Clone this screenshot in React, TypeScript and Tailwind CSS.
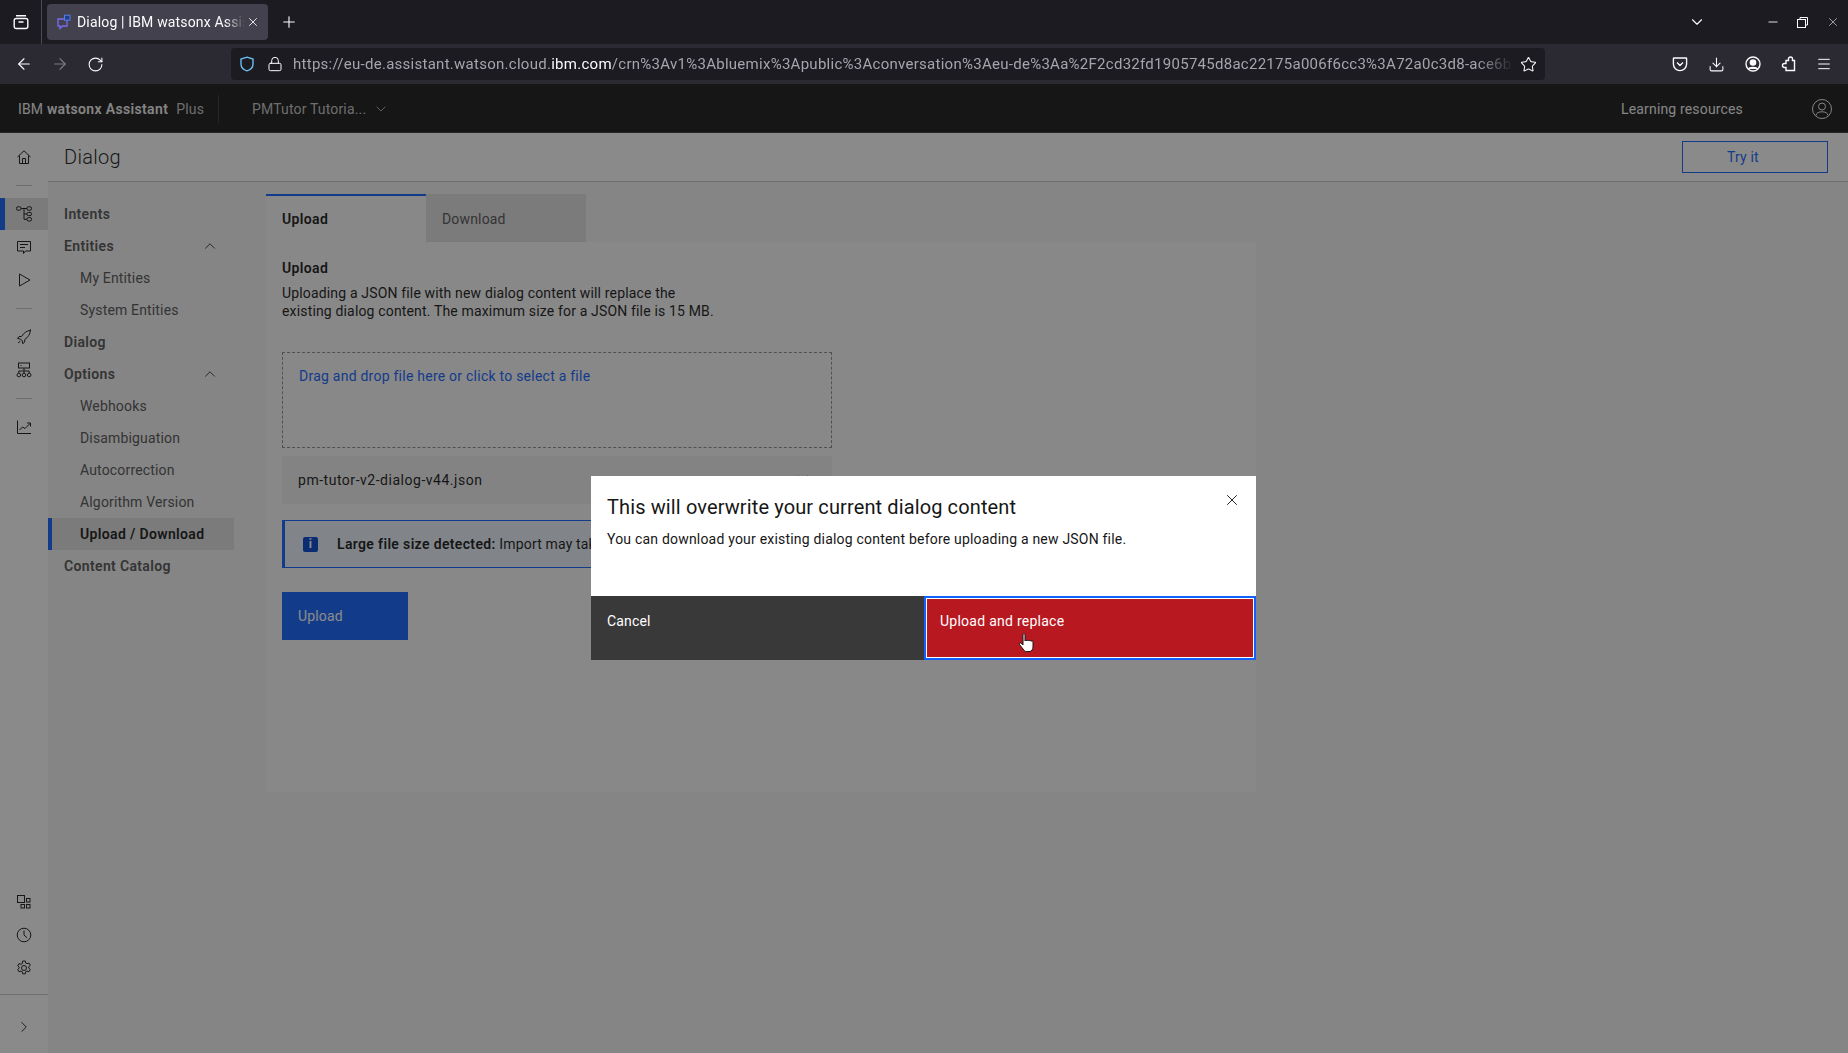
import React from "react";
import { X, Plus, ChevronDown, ChevronUp, ChevronRight, ArrowLeft, ArrowRight, RotateCw, Lock, Star, Download, Menu, Minus } from "lucide-react";

const FONT = "font-['Roboto','Liberation_Sans',sans-serif]";

const Ic = ({ children, size = 16, className = "" }: { children: React.ReactNode; size?: number; className?: string }) => (
  <svg width={size} height={size} viewBox="0 0 16 16" fill="none" stroke="currentColor" strokeWidth={1} className={className}>
    {children}
  </svg>
);

const HomeIc = () => <Ic><path d="M1.5 8 8 1.8 14.5 8M3.5 6.5v8h9v-8M6.5 14.5v-5h3v5" /></Ic>;
const TreeIc = () => (
  <Ic>
    <rect x="0.5" y="0.8" width="4.5" height="3.4" rx="1.4" />
    <rect x="11" y="0.8" width="4.5" height="3.4" rx="1.4" />
    <rect x="11" y="6.4" width="4.5" height="3.2" rx="1.4" />
    <rect x="11" y="11.6" width="4.5" height="3.4" rx="1.4" />
    <path d="M5 2.5h6M8 2.5v10.800h3M8 8h3" />
  </Ic>
);
const ChatIc = () => <Ic><path d="M1.5 2.5h13v9.5H9.5L7.5 14.5V12h-6zM4 5.5h8M4 8.5h5" /></Ic>;
const PlayIc = () => <Ic><path d="M3.5 2v12L14 8z" /></Ic>;
const RocketIc = () => <Ic><path d="M14.5 1.5c-4 .3-6.5 2.3-9 6L3 7.5 1.5 9.500l3 .5 1.700 1.700.5 3 2-1.600v-2.600c3.700-2.500 5.600-5.500 5.800-10zM4.500 12 2 14" /></Ic>;
const NetIc = () => (
  <Ic>
    <rect x="2.5" y="1" width="11" height="5" />
    <path d="M8 6v3M2.800 11V9h10.400v2M8 9v2M4.500 3.500h1" />
    <circle cx="2.800" cy="13" r="1.800" />
    <circle cx="8" cy="13" r="1.800" />
    <circle cx="13.200" cy="13" r="1.800" />
  </Ic>
);
const ChartIc = () => <Ic><path d="M1.500 1.500v13h13.500M3.500 11 6.500 8l2.500 1.500L14 4.500M11 4h3.500v3.500" /></Ic>;
const AppsIc = () => (
  <Ic>
    <rect x="1.500" y="1.500" width="7" height="7" />
    <rect x="10.500" y="4.500" width="3.500" height="3.500" />
    <rect x="5" y="10.500" width="3.500" height="3.500" />
    <rect x="10.500" y="10.500" width="3.500" height="3.500" />
  </Ic>
);
const ClockIc = () => <Ic><circle cx="8" cy="8" r="6.800" /><path d="M8 3.500V8l3 2.800" /></Ic>;
const GearIc = () => (
  <Ic>
    <circle cx="8" cy="8" r="2.500" />
    <path d="M6.700 1h2.600l.4 2 1.300.7 2-.7 1.300 2.300-1.500 1.300v1.600l1.500 1.300-1.300 2.300-2-.7-1.300.7-.4 2H6.700l-.4-2-1.300-.7-2 .7-1.300-2.300 1.500-1.300V7.200L1.700 5.900 3 3.600l2 .7 1.300-.7z" />
  </Ic>
);

const RailBtn = ({ active, children, className = "" }: { active?: boolean; children: React.ReactNode; className?: string }) => (
  <div className={`h-8 w-12 flex items-center justify-center text-[#161616] ${active ? "bg-[#e0e0e0] border-l-[5px] border-[#0f62fe] pr-[5px]" : ""} ${className}`}>
    {children}
  </div>
);

const RailSep = () => <div className="h-px w-4 bg-[#c6c6c6] mx-4 mt-3 mb-3" />;

const NavTop = ({ label, open }: { label: string; open?: boolean }) => (
  <div className="h-8 pl-4 pr-[15px] flex items-center justify-between text-[14px] font-semibold tracking-[0.35px] text-[#525252]">
    <span className="pt-px">{label}</span>
    {open && <ChevronUp size={18} strokeWidth={1.1} className="text-[#161616]" />}
  </div>
);
const NavSub = ({ label, active }: { label: string; active?: boolean }) => (
  <div className={`h-8 flex items-center text-[14px] ${active ? "pl-7 border-l-4 border-[#0f62fe] bg-[#e0e0e0] font-semibold tracking-[0.35px] text-[#161616]" : "pl-8 text-[#525252]"}`}>
    <span className="pt-px">{label}</span>
  </div>
);

const Browser = () => (
  <div className="shrink-0">
    <div className="h-11 bg-[#1c1b22] flex items-center text-[#fbfbfe]">
      <div className="w-[42px] h-full flex items-center justify-center border-r border-[#4a4a52]">
        <svg width="16" height="16" viewBox="0 0 16 16" fill="none" stroke="currentColor" strokeWidth={1.4}>
          <rect x="1.200" y="4.500" width="13.600" height="10" rx="2" />
          <path d="M3 1.700h10M5.500 8h5" />
        </svg>
      </div>
      <div className="ml-[5px] w-[221px] h-9 rounded bg-[#42414d] flex items-center pl-[9px] pr-2">
        <svg width="16" height="16" viewBox="0 0 16 16" fill="none" className="shrink-0">
          <path d="M2 5h9v7H6.500L4 14.500V12H2z" stroke="#7a6cf0" strokeWidth={1.3} />
          <rect x="8.500" y="1.200" width="5.500" height="5" fill="#1d3f8f" stroke="#5b7fe0" strokeWidth={1} />
        </svg>
        <span className="ml-[5px] text-[14px] w-[168px] overflow-hidden whitespace-nowrap [mask-image:linear-gradient(to_right,black_88%,transparent)]">Dialog | IBM watsonx Assistant</span>
        <X size={14} strokeWidth={1.5} className="ml-auto shrink-0" />
      </div>
      <Plus size={18} strokeWidth={1.5} className="ml-3" />
      <div className="flex-1" />
      <ChevronDown size={18} strokeWidth={1.5} className="mr-[60px]" />
      <Minus size={14} strokeWidth={1.5} className="mr-[17px]" />
      <svg width="11" height="11" viewBox="0 0 11 11" fill="none" stroke="currentColor" className="mr-[18px]"><rect x="0.500" y="2.500" width="8" height="8" /><path d="M3 2.500V.5h7.500V8H8.500" /></svg>
      <X size={14} strokeWidth={1} className="mr-[8px]" />
    </div>
    <div className="h-10 bg-[#2b2a33] flex items-center text-[#fbfbfe]">
      <div className="w-[231px] flex items-center pl-[15px] gap-[18px]">
        <ArrowLeft size={18} strokeWidth={1.5} />
        <ArrowRight size={18} strokeWidth={1.5} className="text-[#7c7b83]" />
        <RotateCw size={17} strokeWidth={1.5} />
      </div>
      <div className="w-[1314px] h-8 rounded bg-[#1c1b22] flex items-center pl-[8px] pr-2">
        <svg width="16" height="16" viewBox="0 0 16 16" fill="none" stroke="#6bbdf0" strokeWidth={1.4} className="shrink-0">
          <path d="M8 1.200 14 3v5c0 3.500-2.600 5.800-6 6.800C4.600 13.800 2 11.500 2 8V3z" />
        </svg>
        <Lock size={16} strokeWidth={1.5} className="ml-[12px] shrink-0" />
        <div className="ml-[10px] flex-1 min-w-0 overflow-hidden whitespace-nowrap text-[15px] tracking-[0.27px] text-[#a5a5ac] [mask-image:linear-gradient(to_right,black_97%,transparent)]">
          https://eu-de.assistant.watson.cloud.<span className="text-[#fbfbfe]">ibm.com</span>/crn%3Av1%3Abluemix%3Apublic%3Aconversation%3Aeu-de%3Aa%2F2cd32fd1905745d8ac22175a006f6cc3%3A72a0c3d8-ace6b1f4
        </div>
        <Star size={17} strokeWidth={1.5} className="ml-[6px] shrink-0" />
      </div>
      <div className="flex items-center flex-1 justify-between pl-[127px] pr-[16px]">
        <svg width="16" height="16" viewBox="0 0 16 16" fill="none" stroke="currentColor" strokeWidth={1.4}><path d="M2 2h12a.6.6 0 0 1 .6.6V8a6.600 6.600 0 0 1-13.200 0V2.600A.6.6 0 0 1 2 2zM5 6.500l3 3 3-3" /></svg>
        <Download size={17} strokeWidth={1.5} />
        <svg width="16" height="16" viewBox="0 0 16 16" fill="none" stroke="currentColor" strokeWidth={1.4}><circle cx="8" cy="8" r="7" /><circle cx="8" cy="6.500" r="2.600" fill="currentColor" /><path d="M3.500 13c1-2.200 8-2.200 9 0" fill="currentColor" /></svg>
        <svg width="16" height="16" viewBox="0 0 16 16" fill="none" stroke="currentColor" strokeWidth={1.4}><path d="M8.500 4.500V3a2 2 0 0 1 4 0v1.500H14.500v10H6V11.500H4.500a2 2 0 0 1 0-4H6v-3z" /></svg>
        <Menu size={16} strokeWidth={1.5} />
      </div>
    </div>
  </div>
);

export default function App() {
  return (
    <div className={`relative w-[1848px] h-[1053px] overflow-hidden flex flex-col bg-white tracking-[0.16px] ${FONT}`}>
      <Browser />
      <div className="relative flex-1 min-h-0 flex flex-col">
        <header className="h-[49px] shrink-0 bg-[#161616] border-b border-[#393939] flex items-center text-[#f4f4f4] text-[14px] pt-[2px]">
          <span className="pl-[18px]">IBM <span className="font-semibold tracking-[0.35px]">watsonx Assistant</span></span>
          <span className="ml-2 text-[#c6c6c6]">Plus</span>
          <div className="ml-[14px] h-7 w-px bg-[#393939]" />
          <span className="ml-[33px] text-[#c6c6c6]">PMTutor Tutoria...</span>
          <ChevronDown size={16} strokeWidth={1.25} className="ml-[7px] text-[#c6c6c6]" />
          <span className="ml-auto mr-[69px]">Learning resources</span>
          <svg width="20" height="20" viewBox="0 0 20 20" fill="none" stroke="currentColor" className="mr-[16px]">
            <circle cx="10" cy="10" r="9.500" />
            <circle cx="10" cy="7.500" r="3.500" />
            <path d="M4 16.500c0-5 12-5 12 0" />
          </svg>
        </header>
        <div className="flex-1 min-h-0 flex">
          <aside className="w-12 shrink-0 bg-white flex flex-col pt-2">
            <RailBtn><HomeIc /></RailBtn>
            <div className="h-px w-4 bg-[#c6c6c6] mx-4 mt-3 mb-[12px]" />
            <RailBtn active><TreeIc /></RailBtn>
            <RailBtn className="mt-px"><ChatIc /></RailBtn>
            <RailBtn className="mt-px"><PlayIc /></RailBtn>
            <RailSep />
            <RailBtn><RocketIc /></RailBtn>
            <RailBtn className="mt-px"><NetIc /></RailBtn>
            <RailSep />
            <RailBtn><ChartIc /></RailBtn>
            <div className="flex-1" />
            <RailBtn><AppsIc /></RailBtn>
            <RailBtn className="mt-px"><ClockIc /></RailBtn>
            <RailBtn className="mt-px"><GearIc /></RailBtn>
            <div className="h-px bg-[#c6c6c6] mt-[10px]" />
            <div className="h-[58px] pt-[6px] flex items-center justify-center text-[#161616]">
              <ChevronRight size={18} strokeWidth={1.25} />
            </div>
          </aside>
          <div className="flex-1 min-w-0 flex flex-col bg-[#f4f4f4]">
            <div className="h-[49px] shrink-0 bg-white border-b border-[#c6c6c6] flex items-center justify-between pl-4 pr-5">
              <h1 className="text-[20px] font-light tracking-[0.3px] text-[#161616]">Dialog</h1>
              <div className="w-[146px] h-8 border border-[#0f62fe] flex items-center pl-[44px] text-[14px] text-[#0f62fe]">Try it</div>
            </div>
            <div className="flex-1 min-h-0 flex">
              <nav className="w-[186px] shrink-0 pt-[16px]">
                <NavTop label="Intents" />
                <NavTop label="Entities" open />
                <NavSub label="My Entities" />
                <NavSub label="System Entities" />
                <NavTop label="Dialog" />
                <NavTop label="Options" open />
                <NavSub label="Webhooks" />
                <NavSub label="Disambiguation" />
                <NavSub label="Autocorrection" />
                <NavSub label="Algorithm Version" />
                <NavSub label="Upload / Download" active />
                <NavTop label="Content Catalog" />
              </nav>
              <main className="ml-8 mt-3 w-[990px]">
                <div className="flex h-12 text-[14px]">
                  <div className="w-40 bg-[#fafafa] border-t-2 border-[#0f62fe] pl-4 pt-[13px] font-semibold tracking-[0.35px] text-[#161616]">Upload</div>
                  <div className="w-40 bg-[#e0e0e0] pl-4 pt-[15px] text-[#525252]">Download</div>
                </div>
                <section className="h-[550px] bg-[#fafafa] pt-[17px] px-4 text-[14px] text-[#161616]">
                  <h2 className="font-semibold tracking-[0.35px] leading-[18px]">Upload</h2>
                  <p className="mt-[7px] leading-[18px]">
                    Uploading a JSON file with new dialog content will replace the<br />
                    existing dialog content. The maximum size for a JSON file is 15 MB.
                  </p>
                  <div className="mt-[32px] w-[550px] h-[96px] border border-dashed border-[#8d8d8d] pl-4 pt-[14px] leading-[18px] tracking-[0.24px] text-[#0f62fe]">
                    Drag and drop file here or click to select a file
                  </div>
                  <div className="mt-2 w-[550px] h-12 bg-[#f0f0f0] flex items-center justify-between pl-4 pr-[21px]">
                    <span className="tracking-[0.52px]">pm-tutor-v2-dialog-v44.json</span>
                    <X size={16} strokeWidth={1.25} />
                  </div>
                  <div className="mt-4 w-[550px] h-12 bg-[#edf5ff] border border-[#0f62fe] border-l-[3px] flex items-center pl-[18px]">
                    <span className="w-[15px] h-[15px] rounded-[2px] bg-[#0043ce] text-white text-[12px] font-bold flex items-center justify-center">i</span>
                    <span className="ml-[19px] whitespace-nowrap"><span className="font-semibold tracking-[0.35px]">Large file size detected:</span> Import may take a while to complete.</span>
                  </div>
                  <div className="mt-6 w-[126px] h-12 bg-[#0f62fe] flex items-center pl-4 text-white">Upload</div>
                </section>
              </main>
            </div>
          </div>
        </div>
        <div className="absolute inset-0 bg-[#161616]/50" />
        <div className="absolute left-[591px] top-[392px] w-[665px] h-[184px] flex flex-col bg-white">
          <div className="h-[120px] relative pl-4 pt-[17px]">
            <h3 className="text-[20px] leading-7 tracking-[0.12px] text-[#161616]">This will overwrite your current dialog content</h3>
            <p className="mt-[9px] text-[14px] leading-[18px] tracking-[0.2px] text-[#161616]">You can download your existing dialog content before uploading a new JSON file.</p>
            <X size={18} strokeWidth={1.25} className="absolute right-[15px] top-[15px] text-[#161616]" />
          </div>
          <div className="h-16 flex text-[14px] text-white">
            <div className="w-[333px] bg-[#393939] pl-4 pt-[15px]">Cancel</div>
            <div className="flex-1 bg-[#b81921] border-2 border-[#0f62fe] outline outline-1 -outline-offset-3 outline-white pl-[14px] pt-[13px] tracking-[0.26px]">Upload and replace</div>
          </div>
        </div>
        <svg width="18" height="20" viewBox="0 0 18 20" className="absolute left-[1018px] top-[549px]">
          <path d="M5 1.500c0-1 2-1 2 0V8c0-1 2-1 2 0 0-1 2-1 2 0 0-.8 2-.8 2 .3 0-.6 2-.6 2 .5V14c0 2-1.500 4.500-3 4.500H8.500C7 18.500 6 17.500 5 16L1.500 11.500c-.8-1 .5-2.200 1.500-1.300L5 12z" fill="white" stroke="#161616" strokeWidth={1} />
        </svg>
      </div>
    </div>
  );
}
